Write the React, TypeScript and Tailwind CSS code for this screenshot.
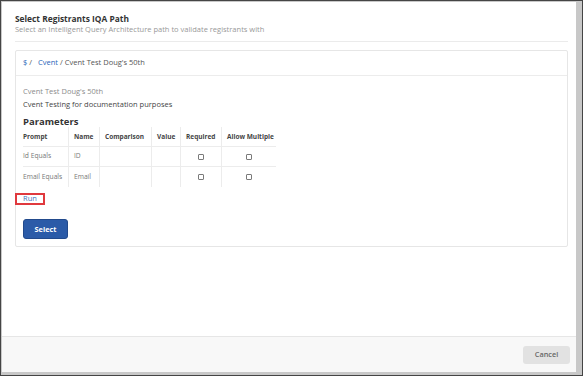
const cols = [
  { label: "Prompt", w: "w-[45px]", first: true },
  { label: "Name", w: "w-[31px]" },
  { label: "Comparison", w: "w-[52px]" },
  { label: "Value", w: "w-[29px]" },
  { label: "Required", w: "w-[41px]" },
  { label: "Allow Multiple", w: "w-[55px]" },
];

function Checkbox() {
  return <div className="mx-auto w-[6px] h-[6px] border border-[#7a7a7a] rounded-[1px]" />;
}

export default function App() {
  const rows = [
    { prompt: "Id Equals", name: "ID" },
    { prompt: "Email Equals", name: "Email" },
  ];

  return (
    <div
      className="w-[583px] h-[376px] bg-[#454545] p-[1px] flex"
      style={{ fontFamily: '"Open Sans", "Liberation Sans", sans-serif' }}
    >
      <div className="flex-1 flex bg-[#c8c8c8] pl-[1px] pt-[1px] pr-[6px] pb-[3px]">
        <div className="flex-1 flex flex-col bg-white">
          <div className="flex-1 pl-[13px] pr-[8px] pt-[11px]">
            <div className="text-[8.4px] leading-[11px] font-bold text-[#333] whitespace-nowrap">
              Select Registrants IQA Path
            </div>
            <div className="text-[7.5px] leading-[10px] text-[#999] whitespace-nowrap">
              Select an Intelligent Query Architecture path to validate registrants with
            </div>
            <div className="mt-[7px] border-t border-[#ebebeb]" />

            <div className="mt-[8px] border border-[#e6e6e6] rounded-[2px]">
              <div className="h-[25px] flex items-center pl-[7px] text-[7.5px] text-[#555] border-b border-[#ececec] whitespace-nowrap">
                <span className="text-[#2a64b8]">$</span>
                <span className="ml-[2px] mr-[6px]">/</span>
                <span className="text-[#2a64b8]">Cvent</span>
                <span className="ml-[2px] mr-[2px]">/</span>
                <span>Cvent Test Doug's 50th</span>
              </div>

              <div className="pl-[7px] pt-[10px] pb-[7px]">
                <div className="text-[7.5px] leading-[10px] text-[#8c8c8c] whitespace-nowrap">Cvent Test Doug's 50th</div>
                <div className="mt-[3px] text-[7.5px] leading-[10px] text-[#444] whitespace-nowrap">
                  Cvent Testing for documentation purposes
                </div>
                <div className="mt-[7px] text-[9.5px] leading-[11px] font-bold text-[#333] whitespace-nowrap">Parameters</div>

                <div className="w-[253px] text-[6.5px] whitespace-nowrap">
                  <div className="flex h-[20px] border-b border-[#ececec] text-[#444] font-bold">
                    {cols.map((c) => (
                      <div
                        key={c.label}
                        className={`${c.w} flex items-center ${c.first ? "" : "pl-[5px] border-l border-[#ececec]"}`}
                      >
                        {c.label}
                      </div>
                    ))}
                  </div>
                  {rows.map((r, i) => (
                    <div
                      key={r.prompt}
                      className={`flex h-[20px] text-[#777] text-[6.7px] ${i === 0 ? "border-b border-[#ececec]" : ""}`}
                    >
                      <div className="w-[45px] flex items-center">{r.prompt}</div>
                      <div className="w-[31px] flex items-center pl-[5px] border-l border-[#ececec]">{r.name}</div>
                      <div className="w-[52px] border-l border-[#ececec]" />
                      <div className="w-[29px] border-l border-[#ececec]" />
                      <div className="w-[41px] flex items-center border-l border-[#ececec]">
                        <Checkbox />
                      </div>
                      <div className="w-[55px] flex items-center border-l border-[#ececec]">
                        <Checkbox />
                      </div>
                    </div>
                  ))}
                </div>

                <div className="mt-[6px] -ml-[8px] w-[30px] h-[12px] border-2 border-[#e0393e] flex items-center pl-[6px]">
                  <span className="text-[7.5px] leading-none text-[#3f72bd]">Run</span>
                </div>

                <button className="mt-[14px] w-[45px] h-[20px] rounded-[3px] bg-[#2b5ba8] border border-[#224a8c] text-white text-[7.3px] font-bold">
                  Select
                </button>
              </div>
            </div>
          </div>

          <div className="h-[36px] border-t border-[#e6e6e6] bg-[#f8f8f8] flex items-center justify-end pr-[6px]">
            <button className="w-[47px] h-[18px] rounded-[3px] bg-[#e2e2e2] text-[#666] text-[7.3px] font-semibold">
              Cancel
            </button>
          </div>
        </div>
      </div>
    </div>
  );
}
